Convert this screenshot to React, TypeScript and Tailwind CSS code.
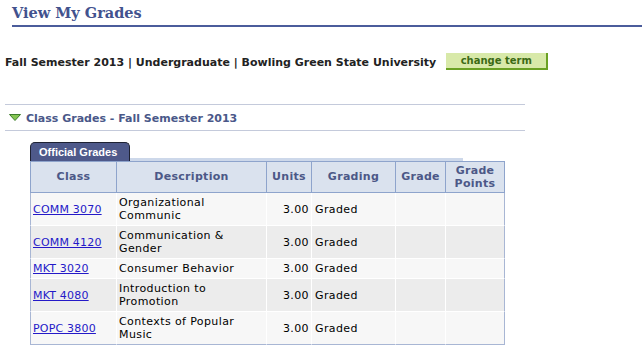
const rows = [
  { cls: "COMM 3070", desc: ["Organizational", "Communic"] },
  { cls: "COMM 4120", desc: ["Communication &", "Gender"] },
  { cls: "MKT 3020", desc: ["Consumer Behavior"] },
  { cls: "MKT 4080", desc: ["Introduction to", "Promotion"] },
  { cls: "POPC 3800", desc: ["Contexts of Popular", "Music"] },
];

const verdana = "font-['DejaVu_Sans',Verdana,sans-serif]";

function Header({ children, first }: { children: React.ReactNode; first?: boolean }) {
  return (
    <th
      className={`bg-[#dae2ee] border-t border-b border-r border-[#8ea4cc] ${
        first ? "border-l" : ""
      } text-[11px] leading-[13.5px] font-bold tracking-[0.3px] text-[#4c5887] text-center align-middle p-0`}
    >
      {children}
    </th>
  );
}

export default function App() {
  return (
    <div className={`w-[642px] h-[358px] overflow-hidden bg-white ${verdana}`}>
      {/* page title */}
      <div className="ml-[12px] h-[27px] border-b-2 border-[#4b5c9b] pt-[4px]">
        <h1 className="font-['DejaVu_Serif',Georgia,serif] font-bold text-[14.5px] leading-[18px] text-[#42528e]">
          View My Grades
        </h1>
      </div>

      {/* term line */}
      <div className="mt-[26px] h-[17px] flex items-center pl-[5px]">
        <span className="pt-[3px] text-[11px] font-bold text-[#222]">
          Fall Semester 2013 | Undergraduate | Bowling Green State University
        </span>
        <button className="ml-[10px] w-[102px] h-[17px] bg-[#d8e9a9] border-r-2 border-b-2 border-[#6aa123] text-[10px] font-bold text-[#3b6a14] flex items-center justify-center">
          change term
        </button>
      </div>

      {/* section header */}
      <div className="mt-[34px] ml-[5px] w-[520px] h-[27px] border-t border-b border-[#c4cadb] flex items-center">
        <svg width="12" height="7" viewBox="0 0 12 7" className="ml-[4px]">
          <polygon points="0.5,0.5 11.5,0.5 6,6.5" fill="#86c653" stroke="#3d7d2c" strokeWidth="1" />
        </svg>
        <span className="ml-[5px] pt-[3px] text-[11px] font-bold text-[#4a5889]">Class Grades - Fall Semester 2013</span>
      </div>

      {/* tab */}
      <div className="mt-[11px] ml-[30px] h-[19px] flex items-end">
        <div className="w-[100px] h-[19px] bg-[#4e598a] border border-b-0 border-[#1e2233] rounded-t-[5px] pl-[8px] flex items-center">
          <span className="font-['Liberation_Sans',Arial,sans-serif] text-[11px] font-bold text-white">Official Grades</span>
        </div>
        <div className="w-[333px] h-[3px] bg-[#cdd8ea]" />
      </div>

      {/* grades table */}
      <table className="ml-[30px] w-[475px] table-fixed border-separate border-spacing-0">
        <colgroup>
          <col className="w-[87px]" />
          <col className="w-[150px]" />
          <col className="w-[45px]" />
          <col className="w-[84px]" />
          <col className="w-[50px]" />
          <col className="w-[59px]" />
        </colgroup>
        <thead>
          <tr className="h-[32px]">
            <Header first>Class</Header>
            <Header>Description</Header>
            <Header>Units</Header>
            <Header>Grading</Header>
            <Header>Grade</Header>
            <Header>
              Grade
              <br />
              Points
            </Header>
          </tr>
        </thead>
        <tbody>
          {rows.map((r, i) => {
            const bg = i % 2 === 0 ? "bg-[#f7f7f7]" : "bg-[#ececec]";
            const bottom = i === rows.length - 1 ? "border-b border-[#a8b6d4]" : "border-b border-white";
            return (
              <tr key={r.cls} className="text-[11px] leading-[13px] text-black">
                <td className={`${bg} ${bottom} border-l border-l-[#a8b6d4] border-r border-r-white py-[3px] px-[2px] align-middle`}>
                  <a href="#" className="text-[#2419c8] underline tracking-[0.2px]">
                    {r.cls}
                  </a>
                </td>
                <td className={`${bg} ${bottom} border-r border-r-white py-[3px] px-[2px] align-middle tracking-[0.4px]`}>
                  {r.desc.map((d, j) => (
                    <div key={j}>{d}</div>
                  ))}
                </td>
                <td className={`${bg} ${bottom} border-r border-r-white py-[3px] pr-[2px] text-right align-middle tracking-[0.4px]`}>
                  3.00
                </td>
                <td className={`${bg} ${bottom} border-r border-r-white py-[3px] pl-[3px] align-middle tracking-[0.4px]`}>
                  Graded
                </td>
                <td className={`${bg} ${bottom} border-r border-r-white py-[3px]`} />
                <td className={`${bg} ${bottom} border-r border-r-[#a8b6d4] py-[3px]`} />
              </tr>
            );
          })}
        </tbody>
      </table>
    </div>
  );
}
